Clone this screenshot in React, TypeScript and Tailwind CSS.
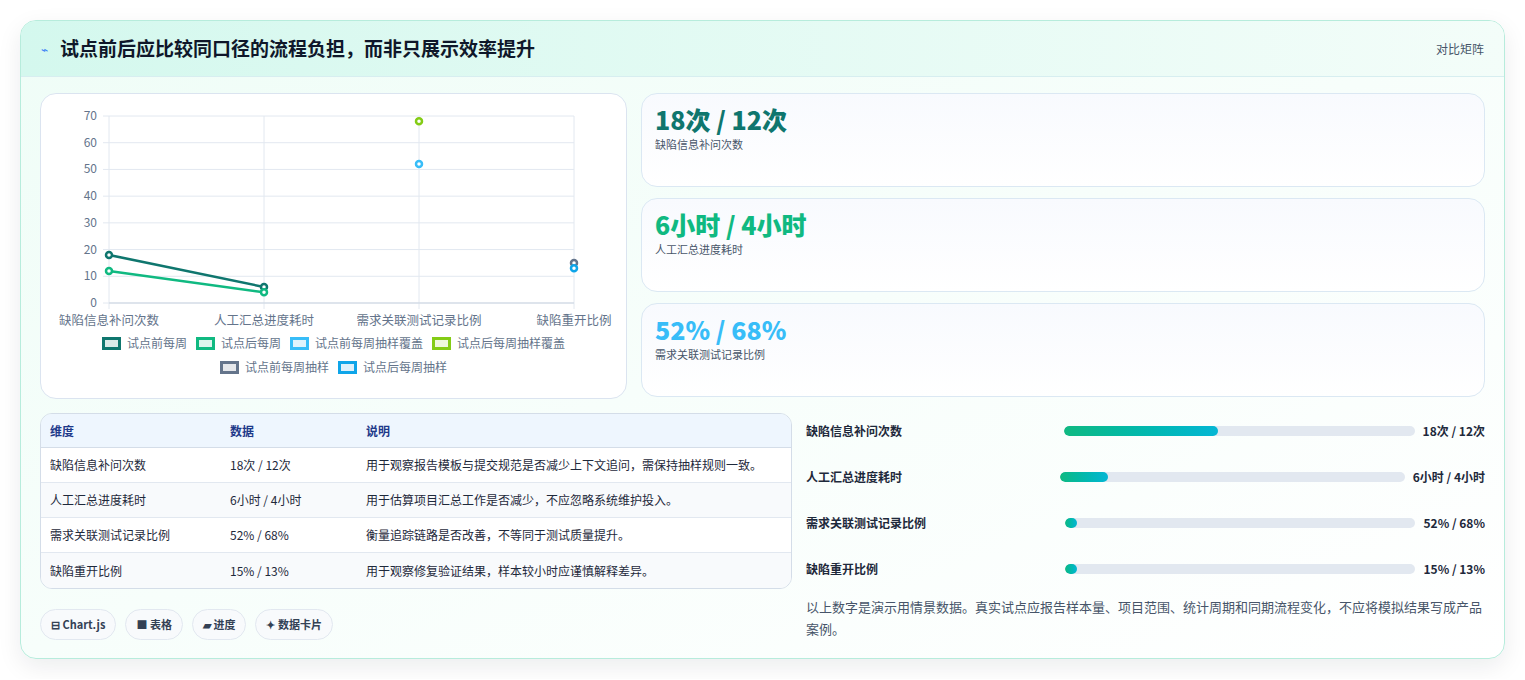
const FONT = { fontFamily: '"Noto Sans CJK SC", "Noto Sans", sans-serif' };

const metrics = [
  { value: '18次 / 12次', label: '缺陷信息补问次数', color: 'text-[#0f766e]' },
  { value: '6小时 / 4小时', label: '人工汇总进度耗时', color: 'text-[#10b981]' },
  { value: '52% / 68%', label: '需求关联测试记录比例', color: 'text-[#38bdf8]' },
];

const rows = [
  { dim: '缺陷信息补问次数', data: '18次 / 12次', note: '用于观察报告模板与提交规范是否减少上下文追问，需保持抽样规则一致。', fill: 44 },
  { dim: '人工汇总进度耗时', data: '6小时 / 4小时', note: '用于估算项目汇总工作是否减少，不应忽略系统维护投入。', fill: 14 },
  { dim: '需求关联测试记录比例', data: '52% / 68%', note: '衡量追踪链路是否改善，不等同于测试质量提升。', fill: 3.5 },
  { dim: '缺陷重开比例', data: '15% / 13%', note: '用于观察修复验证结果，样本较小时应谨慎解释差异。', fill: 3.5 },
];

const legend = [
  [
    { label: '试点前每周', border: '#0f766e', bg: '#dbeae8' },
    { label: '试点后每周', border: '#10b981', bg: '#dcf5ec' },
    { label: '试点前每周抽样覆盖', border: '#38bdf8', bg: '#e0f3fc' },
    { label: '试点后每周抽样覆盖', border: '#84cc16', bg: '#eef8dc' },
  ],
  [
    { label: '试点前每周抽样', border: '#64748b', bg: '#e5e7eb' },
    { label: '试点后每周抽样', border: '#0ea5e9', bg: '#dcf0fb' },
  ],
];

const xs = [68, 223, 378, 533];
const y = (v: number) => 209 - (v / 70) * 187;

function Chart() {
  const cats = ['缺陷信息补问次数', '人工汇总进度耗时', '需求关联测试记录比例', '缺陷重开比例'];
  return (
    <div className="flex h-full flex-col rounded-2xl border border-[#dbe4f0] bg-white">
      <svg width="586" height="240" className="block">
        {[0, 10, 20, 30, 40, 50, 60, 70].map((v) => (
          <g key={v}>
            <line x1={62} x2={533} y1={y(v)} y2={y(v)} stroke="#e2e8f0" />
            <text x={56} y={y(v) + 4} textAnchor="end" fontSize="12" fill="#64748b">{v}</text>
          </g>
        ))}
        {xs.map((x) => (
          <line key={x} x1={x} x2={x} y1={y(70)} y2={y(0) + 6} stroke="#e2e8f0" />
        ))}
        <line x1={68} x2={533} y1={y(0)} y2={y(0)} stroke="#cbd5e1" />
        {cats.map((c, i) => (
          <text key={c} x={xs[i]} y={231} textAnchor="middle" fontSize="12.5" fill="#64748b">{c}</text>
        ))}
        <polyline points={`${xs[0]},${y(18)} ${xs[1]},${y(6)}`} fill="none" stroke="#0f766e" strokeWidth="2.5" />
        <polyline points={`${xs[0]},${y(12)} ${xs[1]},${y(4)}`} fill="none" stroke="#10b981" strokeWidth="2.5" />
        {[
          [0, 18, '#0f766e'], [1, 6, '#0f766e'], [0, 12, '#10b981'], [1, 4, '#10b981'],
          [2, 52, '#38bdf8'], [2, 68, '#84cc16'], [3, 15, '#64748b'], [3, 13, '#0ea5e9'],
        ].map(([i, v, c], k) => (
          <circle key={k} cx={xs[i as number]} cy={y(v as number)} r="3" fill="white" stroke={c as string} strokeWidth="2.5" />
        ))}
      </svg>
      <div className="flex flex-col items-center gap-[6px]">
        {legend.map((line, li) => (
          <div key={li} className="flex gap-[9px]">
            {line.map((l) => (
              <div key={l.label} className="flex items-center gap-[6px] text-[12px] text-[#64748b]">
                <span className="h-[13px] w-[19px] border-[3px]" style={{ borderColor: l.border, background: l.bg }} />
                {l.label}
              </div>
            ))}
          </div>
        ))}
      </div>
    </div>
  );
}

export default function App() {
  return (
    <div className="bg-white p-5" style={FONT}>
      <div className="overflow-hidden rounded-2xl border border-[#b7ecdc] bg-gradient-to-br from-[#effdf7] to-white shadow-[0_8px_24px_rgba(15,23,42,0.08)]">
        <div className="flex h-14 items-center justify-between border-b border-[#d7eef0] bg-gradient-to-r from-[#d4f8ee] to-[#f3fdf9] px-5">
          <div className="flex items-center gap-3">
            <span className="text-[12px] text-[#3b82f6]">⌁</span>
            <h1 className="text-[19px] font-bold text-[#0f172a]">试点前后应比较同口径的流程负担，而非只展示效率提升</h1>
          </div>
          <span className="text-[12px] text-[#475569]">对比矩阵</span>
        </div>

        <div className="flex flex-col gap-[14px] px-[19px] pb-[18px] pt-[16px]">
          <div className="grid grid-cols-[587px_1fr] gap-[14px]">
            <div className="h-[306px]">
              <Chart />
            </div>
            <div className="flex flex-col gap-[11px]">
              {metrics.map((m) => (
                <div key={m.label} className="flex h-[94px] flex-col rounded-2xl border border-[#dbe8f3] bg-gradient-to-b from-[#f8fafe] to-white px-[13px] pt-[8px]">
                  <div className={`text-[25px] font-extrabold leading-[34px] ${m.color}`}>{m.value}</div>
                  <div className="text-[11px] text-[#475569]">{m.label}</div>
                </div>
              ))}
            </div>
          </div>

          <div className="grid grid-cols-[752px_1fr] gap-[14px]">
            <div className="flex flex-col gap-[20px]">
              <div className="overflow-hidden rounded-xl border border-[#d4dde8] text-[12px]">
                <div className="grid h-[34px] grid-cols-[180px_136px_1fr] items-center border-b border-[#d4dde8] bg-[#eef6fe] px-[9px] font-semibold text-[#1e3a8a]">
                  <span>维度</span><span>数据</span><span>说明</span>
                </div>
                {rows.map((r, i) => (
                  <div key={r.dim} className={`grid h-[35px] grid-cols-[180px_136px_1fr] items-center px-[9px] text-[#1e293b] ${i < 3 ? 'border-b border-[#e2e8f0]' : ''} ${i % 2 ? 'bg-[#f8fafc]' : 'bg-white'}`}>
                    <span>{r.dim}</span><span>{r.data}</span><span>{r.note}</span>
                  </div>
                ))}
              </div>
              <div className="flex gap-[9px]">
                {['⊟ Chart.js', '■ 表格', '▰ 进度', '✦ 数据卡片'].map((p) => (
                  <span key={p} className="rounded-full border border-[#e2e8f0] bg-[#f8fafc] px-[10px] py-[6px] text-[11px] font-bold text-[#334155]">{p}</span>
                ))}
              </div>
            </div>

            <div className="-mt-[5px] flex flex-col">
              {rows.map((r) => (
                <div key={r.dim} className="grid h-[46px] grid-cols-[1fr_1.4fr_auto] items-center gap-2 text-[12px] font-semibold text-[#1e293b]">
                  <span>{r.dim}</span>
                  <div className="h-[10px] overflow-hidden rounded-full bg-[#e2e8f0]">
                    <div className="h-full rounded-full bg-gradient-to-r from-[#10b981] to-[#06b6d4]" style={{ width: `${r.fill}%` }} />
                  </div>
                  <span className="text-right">{r.data}</span>
                </div>
              ))}
              <p className="mt-[4px] text-[13px] leading-[22px] text-[#475569]">
                以上数字是演示用情景数据。真实试点应报告样本量、项目范围、统计周期和同期流程变化，不应将模拟结果写成产品案例。
              </p>
            </div>
          </div>
        </div>
      </div>
    </div>
  );
}
